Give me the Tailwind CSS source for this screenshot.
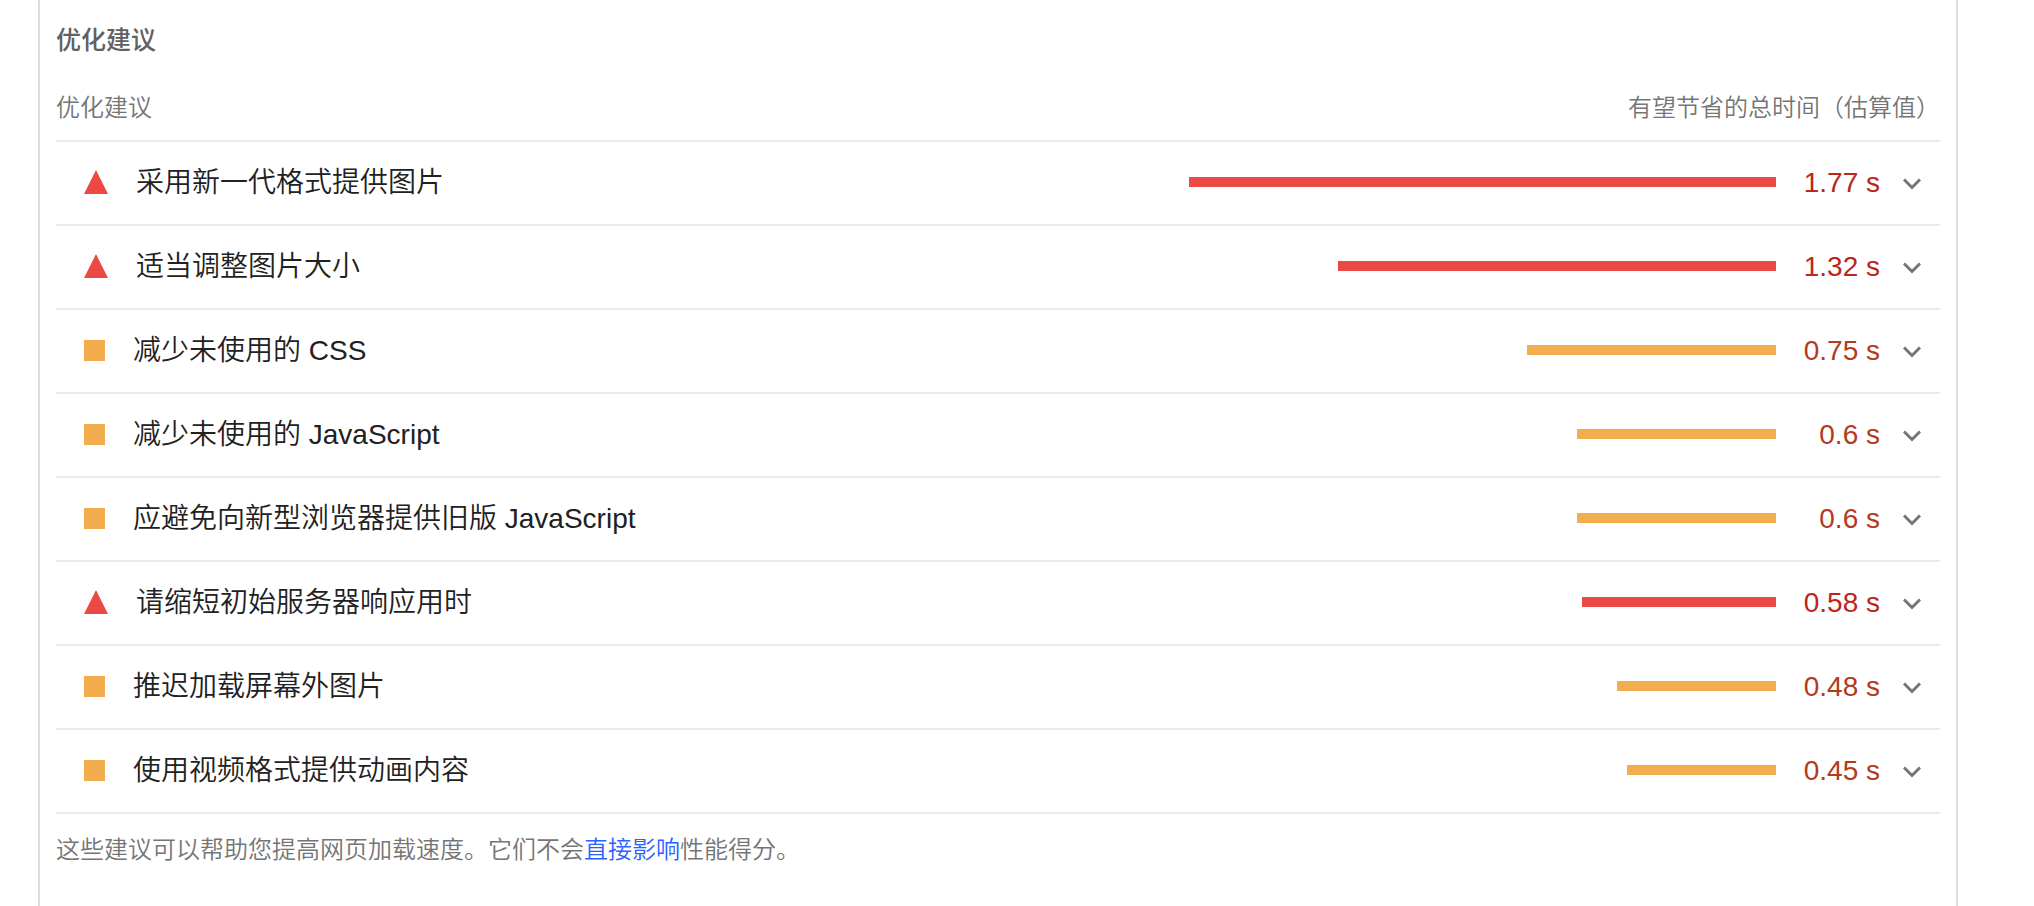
<!DOCTYPE html>
<html lang="zh-CN">
<head>
<meta charset="utf-8">
<meta name="viewport" content="width=device-width, initial-scale=1">
<title>优化建议</title>
<script src="https://cdn.jsdelivr.net/npm/@tailwindcss/browser@4"></script>
</head>
<body class="bg-white font-['Liberation_Sans','Noto_Sans_CJK_SC',sans-serif] font-[350] text-[#212121]">
<svg class="hidden" aria-hidden="true">
  <symbol id="chevron" viewBox="0 0 18 12"><path d="M1 1.5 9 9.5 17 1.5" fill="none" stroke="#757575" stroke-width="3"/></symbol>
  <symbol id="fail" viewBox="0 0 24 24"><path d="M12 0 24 24H0Z" fill="#eb4941"/></symbol>
</svg>
<main class="ml-[38px] mr-[76px] min-h-screen border-x-2 border-[#dcdce0] px-4">
  <h2 class="pt-5 text-[25px] leading-10 font-medium text-[#616161]">优化建议</h2>
  <div class="flex justify-between border-b-2 border-[#ebebeb] pt-7 pb-3 text-2xl leading-10 text-[#757575]">
    <span>优化建议</span>
    <span>有望节省的总时间（估算值）</span>
  </div>
  <ul class="text-[28px] leading-10">
    <li class="border-b-2 border-[#ebebeb]">
      <button type="button" aria-expanded="false" class="flex w-full items-center py-[21px] pr-[19px] pl-7 text-left">
        <svg class="mr-7 mb-0.5 size-6 shrink-0" aria-hidden="true"><use href="#fail"/></svg>
        <span class="flex-1">采用新一代格式提供图片</span>
        <span class="mb-0.5 flex w-[587px] justify-end"><span class="h-2.5 bg-[#eb4941]" style="width:100%"></span></span>
        <span class="w-[104px] text-right text-[#b9261b]">1.77 s</span>
        <svg class="mt-0.5 ml-[23px] h-3 w-[18px] shrink-0" aria-hidden="true"><use href="#chevron"/></svg>
      </button>
    </li>
    <li class="border-b-2 border-[#ebebeb]">
      <button type="button" aria-expanded="false" class="flex w-full items-center py-[21px] pr-[19px] pl-7 text-left">
        <svg class="mr-7 mb-0.5 size-6 shrink-0" aria-hidden="true"><use href="#fail"/></svg>
        <span class="flex-1">适当调整图片大小</span>
        <span class="mb-0.5 flex w-[587px] justify-end"><span class="h-2.5 bg-[#eb4941]" style="width:74.6%"></span></span>
        <span class="w-[104px] text-right text-[#b9261b]">1.32 s</span>
        <svg class="mt-0.5 ml-[23px] h-3 w-[18px] shrink-0" aria-hidden="true"><use href="#chevron"/></svg>
      </button>
    </li>
    <li class="border-b-2 border-[#ebebeb]">
      <button type="button" aria-expanded="false" class="flex w-full items-center py-[21px] pr-[19px] pl-7 text-left">
        <span class="mr-7 mb-0.5 size-[21px] shrink-0 bg-[#f2ae4e]"></span>
        <span class="flex-1">减少未使用的 CSS</span>
        <span class="mb-0.5 flex w-[587px] justify-end"><span class="h-2.5 bg-[#f2ae4e]" style="width:42.4%"></span></span>
        <span class="w-[104px] text-right text-[#b23b1b]">0.75 s</span>
        <svg class="mt-0.5 ml-[23px] h-3 w-[18px] shrink-0" aria-hidden="true"><use href="#chevron"/></svg>
      </button>
    </li>
    <li class="border-b-2 border-[#ebebeb]">
      <button type="button" aria-expanded="false" class="flex w-full items-center py-[21px] pr-[19px] pl-7 text-left">
        <span class="mr-7 mb-0.5 size-[21px] shrink-0 bg-[#f2ae4e]"></span>
        <span class="flex-1">减少未使用的 JavaScript</span>
        <span class="mb-0.5 flex w-[587px] justify-end"><span class="h-2.5 bg-[#f2ae4e]" style="width:33.9%"></span></span>
        <span class="w-[104px] text-right text-[#b23b1b]">0.6 s</span>
        <svg class="mt-0.5 ml-[23px] h-3 w-[18px] shrink-0" aria-hidden="true"><use href="#chevron"/></svg>
      </button>
    </li>
    <li class="border-b-2 border-[#ebebeb]">
      <button type="button" aria-expanded="false" class="flex w-full items-center py-[21px] pr-[19px] pl-7 text-left">
        <span class="mr-7 mb-0.5 size-[21px] shrink-0 bg-[#f2ae4e]"></span>
        <span class="flex-1">应避免向新型浏览器提供旧版 JavaScript</span>
        <span class="mb-0.5 flex w-[587px] justify-end"><span class="h-2.5 bg-[#f2ae4e]" style="width:33.9%"></span></span>
        <span class="w-[104px] text-right text-[#b23b1b]">0.6 s</span>
        <svg class="mt-0.5 ml-[23px] h-3 w-[18px] shrink-0" aria-hidden="true"><use href="#chevron"/></svg>
      </button>
    </li>
    <li class="border-b-2 border-[#ebebeb]">
      <button type="button" aria-expanded="false" class="flex w-full items-center py-[21px] pr-[19px] pl-7 text-left">
        <svg class="mr-7 mb-0.5 size-6 shrink-0" aria-hidden="true"><use href="#fail"/></svg>
        <span class="flex-1">请缩短初始服务器响应用时</span>
        <span class="mb-0.5 flex w-[587px] justify-end"><span class="h-2.5 bg-[#eb4941]" style="width:33.05%"></span></span>
        <span class="w-[104px] text-right text-[#b9261b]">0.58 s</span>
        <svg class="mt-0.5 ml-[23px] h-3 w-[18px] shrink-0" aria-hidden="true"><use href="#chevron"/></svg>
      </button>
    </li>
    <li class="border-b-2 border-[#ebebeb]">
      <button type="button" aria-expanded="false" class="flex w-full items-center py-[21px] pr-[19px] pl-7 text-left">
        <span class="mr-7 mb-0.5 size-[21px] shrink-0 bg-[#f2ae4e]"></span>
        <span class="flex-1">推迟加载屏幕外图片</span>
        <span class="mb-0.5 flex w-[587px] justify-end"><span class="h-2.5 bg-[#f2ae4e]" style="width:27.1%"></span></span>
        <span class="w-[104px] text-right text-[#b23b1b]">0.48 s</span>
        <svg class="mt-0.5 ml-[23px] h-3 w-[18px] shrink-0" aria-hidden="true"><use href="#chevron"/></svg>
      </button>
    </li>
    <li class="border-b-2 border-[#ebebeb]">
      <button type="button" aria-expanded="false" class="flex w-full items-center py-[21px] pr-[19px] pl-7 text-left">
        <span class="mr-7 mb-0.5 size-[21px] shrink-0 bg-[#f2ae4e]"></span>
        <span class="flex-1">使用视频格式提供动画内容</span>
        <span class="mb-0.5 flex w-[587px] justify-end"><span class="h-2.5 bg-[#f2ae4e]" style="width:25.4%"></span></span>
        <span class="w-[104px] text-right text-[#b23b1b]">0.45 s</span>
        <svg class="mt-0.5 ml-[23px] h-3 w-[18px] shrink-0" aria-hidden="true"><use href="#chevron"/></svg>
      </button>
    </li>
  </ul>
  <p class="pt-4 text-2xl leading-10 text-[#757575]">这些建议可以帮助您提高网页加载速度。它们不会<a href="#" class="text-[#2962ff]">直接影响</a>性能得分。</p>
</main>
</body>
</html>
